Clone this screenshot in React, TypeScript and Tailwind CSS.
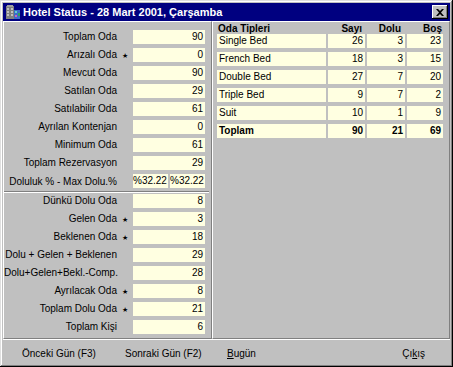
import React from "react";

const FONT = { fontFamily: '"Liberation Sans", Arial, sans-serif' };

interface StatRowProps {
  label: string;
  value: string;
  star?: boolean;
}

const StatRow = ({ label, value, star }: StatRowProps) => (
  <div className="flex items-center h-[14px] mb-[4px]">
    <div className="w-[113px] text-right whitespace-nowrap leading-[14px]">{label}</div>
    <div className="w-[16px] text-center text-[7px] leading-[14px] pt-[2px]">{star ? "★" : ""}</div>
    <div className="w-[72px] h-[14px] bg-[#ffffe1] text-right pr-[2px] leading-[14px]">{value}</div>
  </div>
);

const upperRows: StatRowProps[] = [
  { label: "Toplam Oda", value: "90" },
  { label: "Arızalı Oda", value: "0", star: true },
  { label: "Mevcut Oda", value: "90" },
  { label: "Satılan Oda", value: "29" },
  { label: "Satılabilir Oda", value: "61" },
  { label: "Ayrılan Kontenjan", value: "0" },
  { label: "Minimum Oda", value: "61" },
  { label: "Toplam Rezervasyon", value: "29" },
];

const lowerRows: StatRowProps[] = [
  { label: "Dünkü Dolu Oda", value: "8" },
  { label: "Gelen Oda", value: "3", star: true },
  { label: "Beklenen Oda", value: "18", star: true },
  { label: "Dolu + Gelen + Beklenen", value: "29" },
  { label: "Dolu+Gelen+Bekl.-Comp.", value: "28" },
  { label: "Ayrılacak Oda", value: "8", star: true },
  { label: "Toplam Dolu Oda", value: "21", star: true },
  { label: "Toplam Kişi", value: "6" },
];

const roomRows = [
  ["Single Bed", "26", "3", "23"],
  ["French Bed", "18", "3", "15"],
  ["Double Bed", "27", "7", "20"],
  ["Triple Bed", "9", "7", "2"],
  ["Suit", "10", "1", "9"],
];

const HotelIcon = () => (
  <svg width="16" height="16" viewBox="0 0 16 16">
    <rect x="1" y="2" width="8" height="13" fill="#808080" />
    <rect x="2" y="1" width="6" height="2" fill="#a0a0a0" />
    {[4, 7, 10].map((y) => (
      <g key={y}>
        <rect x="2" y={y} width="2" height="2" fill="#c0c0c0" />
        <rect x="6" y={y} width="2" height="2" fill="#c0c0c0" />
      </g>
    ))}
    <rect x="9" y="6" width="6" height="9" fill="#3c6cc8" />
    <rect x="10" y="7" width="2" height="2" fill="#5fd0d0" />
    <rect x="13" y="9" width="2" height="3" fill="#2fa060" />
    <rect x="10" y="11" width="2" height="2" fill="#d060c0" />
  </svg>
);

const CloseButton = () => (
  <div className="w-[16px] h-[14px] bg-[#c0c0c0] shadow-[inset_-1px_-1px_#000,inset_1px_1px_#fff,inset_-2px_-2px_#808080] flex items-center justify-center">
    <svg width="8" height="7" viewBox="0 0 8 7">
      <path d="M0 0h2l2 2 2-2h2L5 3.5 8 7H6L4 5 2 7H0l3-3.5z" fill="#000" />
    </svg>
  </div>
);

const App = () => {
  return (
    <div
      style={FONT}
      className="w-[453px] h-[367px] bg-[#c0c0c0] p-[3px] flex flex-col text-[10px] text-black shadow-[inset_-1px_-1px_#000,inset_1px_1px_#dfdfdf,inset_-2px_-2px_#808080,inset_2px_2px_#fff]"
    >
      {/* title bar */}
      <div className="h-[18px] bg-[#000080] flex items-center pl-[2px] pr-[2px]">
        <HotelIcon />
        <span className="ml-[2px] text-white font-bold text-[11px] whitespace-nowrap">
          Hotel Status - 28 Mart 2001, Çarşamba
        </span>
        <div className="ml-auto">
          <CloseButton />
        </div>
      </div>

      <div className="flex h-[318px]">
        {/* left panel */}
        <div className="w-[209px] border border-t-white border-l-white border-b-[#808080] border-r-[#808080] pt-[8px]">
          {upperRows.map((r) => (
            <StatRow key={r.label} {...r} />
          ))}
          <div className="flex items-center h-[14px]">
            <div className="w-[113px] text-right whitespace-nowrap">Doluluk % - Max Dolu.%</div>
            <div className="w-[16px]" />
            <div className="w-[35px] h-[14px] bg-[#ffffe1] text-right pr-[2px] leading-[14px]">%32.22</div>
            <div className="w-[35px] h-[14px] ml-[2px] bg-[#ffffe1] text-right pr-[2px] leading-[14px]">%32.22</div>
          </div>
          <div className="mt-[3px] mb-[1px] mr-[2px] border-t border-t-[#808080] border-b border-b-white" />
          {lowerRows.map((r) => (
            <StatRow key={r.label} {...r} />
          ))}
        </div>

        {/* room types grid */}
        <div className="flex-1 border border-t-white border-l-white border-b-[#808080] border-r-[#808080] pl-[4px]">
          <div className="flex h-[12px] items-center font-bold">
            <div className="w-[109px] pl-[1px]">Oda Tipleri</div>
            <div className="w-[37px] ml-[2px] text-right pr-[3px]">Sayı</div>
            <div className="w-[38px] ml-[2px] text-right pr-[4px]">Dolu</div>
            <div className="w-[36px] ml-[2px] text-right pr-[1px]">Boş</div>
          </div>
          {[...roomRows, ["Toplam", "90", "21", "69"]].map((row, i) => (
            <div key={row[0]} className={`flex h-[14px] mb-[4px] leading-[14px] ${i === 5 ? "font-bold" : ""}`}>
              <div className="w-[109px] bg-[#ffffe1] pl-[2px]">{row[0]}</div>
              <div className="w-[37px] ml-[2px] bg-[#ffffe1] text-right pr-[2px]">{row[1]}</div>
              <div className="w-[38px] ml-[2px] bg-[#ffffe1] text-right pr-[2px]">{row[2]}</div>
              <div className="w-[36px] ml-[2px] bg-[#ffffe1] text-right pr-[2px]">{row[3]}</div>
            </div>
          ))}
        </div>
      </div>

      {/* bottom buttons */}
      <div className="flex-1 border-t border-t-white flex items-center pt-[2px] text-[10px]">
        <span className="w-[122px] pl-[19px] whitespace-nowrap">Önceki Gün (F3)</span>
        <span className="w-[102px] whitespace-nowrap">Sonraki Gün (F2)</span>
        <span className="whitespace-nowrap">
          <span className="underline">B</span>ugün
        </span>
        <span className="ml-auto mr-[25px] whitespace-nowrap">
          Çı<span className="underline">k</span>ış
        </span>
      </div>
    </div>
  );
};

export default App;
